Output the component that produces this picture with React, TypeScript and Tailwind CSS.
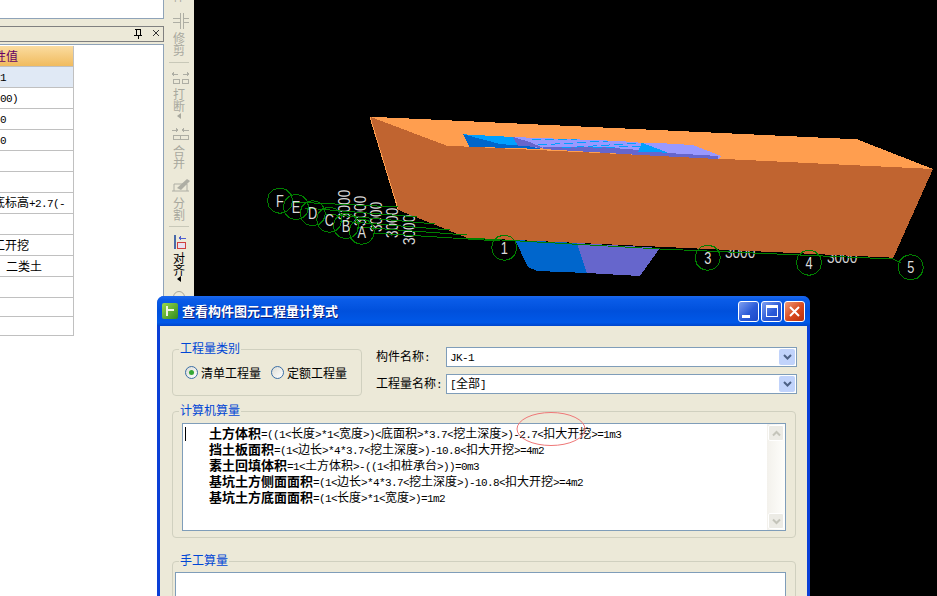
const ROWS = [
  { text: "1", cls: "ml-0", bg: "bg-[#e0e9f5]" },
  { text: "00)", cls: "ml-0" },
  { text: "0", cls: "ml-0" },
  { text: "0", cls: "ml-0" },
  { text: "" },
  { text: "" },
  { text: "底标高+2.7(-", cls: "-ml-[7px]" },
  { text: "" },
  { text: "工开挖", cls: "-ml-[7px]" },
  { text: "二类土", cls: "ml-[6px]" },
  { text: "" },
];

const FORMULAS = [
  { label: "土方体积", text: "=((1<长度>*1<宽度>)<底面积>*3.7<挖土深度>)-2.7<扣大开挖>=1m3" },
  { label: "挡土板面积", text: "=(1<边长>*4*3.7<挖土深度>)-10.8<扣大开挖>=4m2" },
  { label: "素土回填体积", text: "=1<土方体积>-((1<扣桩承台>))=0m3" },
  { label: "基坑土方侧面面积", text: "=(1<边长>*4*3.7<挖土深度>)-10.8<扣大开挖>=4m2" },
  { label: "基坑土方底面面积", text: "=(1<长度>*1<宽度>)=1m2" },
];

const AXES = [
  { x: 280, y: 200.7, t: "F" },
  { x: 296, y: 207, t: "E" },
  { x: 312.7, y: 213.3, t: "D" },
  { x: 329.3, y: 219.7, t: "C" },
  { x: 346, y: 226, t: "B" },
  { x: 361.7, y: 231.7, t: "A" },
  { x: 504.3, y: 247.7, t: "1" },
  { x: 707.7, y: 257.7, t: "3" },
  { x: 809, y: 262.7, t: "4" },
  { x: 910.7, y: 267.3, t: "5" },
];

const AXIS_LINES = [
  "293,202 398,207",
  "305,208 417,217",
  "325,214 435,224",
  "340,221 450,230",
  "357,227 467,235",
  "373,233 500,241",
  "467,238 660,249 893,259 901,263",
];

const VERTICAL_DIMS = [
  { x: 350, y: 220 },
  { x: 366, y: 226 },
  { x: 382, y: 232 },
  { x: 398, y: 238 },
  { x: 415, y: 245 },
];

function ringPoints(cx: number, cy: number, r: number) {
  const pts: string[] = [];
  for (let i = 0; i < 12; i++) {
    const a = (i / 12) * Math.PI * 2;
    pts.push(`${(cx + r * Math.cos(a)).toFixed(1)},${(cy + r * Math.sin(a)).toFixed(1)}`);
  }
  return pts.join(" ");
}

// half-width latin next to full-width CJK, like the old bitmap font
function Mixed({ text }: { text: string }) {
  const parts = text.split(/([\x00-\x7f]+)/).filter(Boolean);
  return (
    <>
      {parts.map((p, i) =>
        /^[\x00-\x7f]/.test(p) ? (
          <span key={i} className="font-['Liberation_Mono',monospace] text-[11px] tracking-[-0.6px]">
            {p}
          </span>
        ) : (
          <span key={i}>{p}</span>
        )
      )}
    </>
  );
}

function Scene() {
  return (
    <svg width="743" height="596" viewBox="194 0 743 596" shapeRendering="crispEdges" className="block">
      {/* dimension labels sit behind the solid */}
      {VERTICAL_DIMS.map((d) => (
        <text
          key={d.x}
          transform={`translate(${d.x} ${d.y}) rotate(-90) scale(0.85 1)`}
          fontFamily="Liberation Sans"
          fontSize="16"
          fill="#d4d4d4"
        >
          3000
        </text>
      ))}
      <text transform="translate(725 258) scale(0.85 1)" fontFamily="Liberation Sans" fontSize="16" fill="#d4d4d4">3000</text>
      <text transform="translate(827 263) scale(0.85 1)" fontFamily="Liberation Sans" fontSize="16" fill="#d4d4d4">3000</text>

      {/* pit below the block */}
      <polygon points="515,240 528,267 537,271 587,273 577,243" fill="#0066cc" />
      <polygon points="577,243 587,273 640,276 660,248" fill="#6666cc" />

      {/* block */}
      <polygon points="370,116.7 857,139.3 933,169 446.7,145.7" fill="#ff9e4f" />
      <polygon points="370,116.7 446.7,145.7 933,169 893.3,257.7 466.7,237.7 398.3,210" fill="#c06430" />
      <line x1="370" y1="117" x2="398" y2="209" stroke="#ff9e4f" />
      <rect x="396" y="206" width="2" height="1" fill="#ff0000" />

      {/* pit seen through the top */}
      <polygon points="513,137 620,141 640,142.7 663,143.3 693,145 721,156 718,159 640,154 543,148 517,146.5" fill="#9999ff" />
      <polygon points="513,137 518,146 543,148 530,142" fill="#6666cc" />
      <polygon points="543,147 600,147 640,150 668,153 718,156 718,159 640,155 543,149" fill="#6666cc" />
      <polygon points="463.3,134.3 513,137 518,146 500,144" fill="#00a0ff" />
      <polygon points="463.3,134.3 469.3,146.7 543,149 530,146.5 500,144" fill="#0066cc" />
      <polygon points="641.7,142.7 638.3,151.7 668,152.7" fill="#00a0ff" />
      <g stroke="#00a0ff" strokeDasharray="9 4">
        <line x1="532" y1="140" x2="578" y2="139" />
        <line x1="538" y1="145" x2="608" y2="141" />
        <line x1="562" y1="148" x2="640" y2="143" />
        <line x1="593" y1="148" x2="640" y2="146" />
      </g>

      {/* axis grid */}
      <g stroke="#008000" fill="none">
        {AXIS_LINES.map((l) => (
          <polyline key={l} points={l} />
        ))}
        {AXES.map((a) => (
          <polygon key={a.t} points={ringPoints(a.x, a.y, 12.7)} />
        ))}
      </g>
      {AXES.map((a) => (
        <text
          key={a.t}
          transform={`translate(${a.x} ${a.y + 6}) scale(0.8 1)`}
          textAnchor="middle"
          fontFamily="Liberation Sans"
          fontSize="16"
          fill="#dcdcdc"
        >
          {a.t}
        </text>
      ))}
    </svg>
  );
}

function LeftPanel() {
  return (
    <div className="w-[164px] h-full shrink-0 flex flex-col bg-[#ece9d8]">
      <div className="h-[19px] shrink-0 bg-white border-b border-r border-[#8fa3b8]" />
      <div className="h-[7px] shrink-0" />
      <div className="h-[16px] shrink-0 border-y border-r border-[#808080] bg-[#ece9d8] relative flex items-center justify-end">
        <svg width="30" height="12" viewBox="0 0 30 12" className="mr-[2px]">
          <path d="M4 1h6M5 1v6M9 1v6M3 7h8M7 7v4" stroke="#000" fill="none" shapeRendering="crispEdges" />
          <path d="M22 2l6 6M28 2l-6 6" stroke="#333" fill="none" />
        </svg>
      </div>
      <div className="h-[2px] shrink-0" />
      <div className="flex-1 bg-white border-r border-t border-[#8fa3b8] pt-[1px]">
        <div className="w-[74px] overflow-hidden border-r border-[#c0c0c0]">
          <div className="h-[21px] border-b border-[#c0c0c0] bg-[linear-gradient(180deg,#fbdca0,#f1bb5e)] flex items-center whitespace-nowrap text-[12px] text-[#660066]">
            <span className="-ml-[18px]">属性值</span>
          </div>
          {ROWS.map((r, i) => (
            <div
              key={i}
              className={`h-[21px] border-b border-[#c0c0c0] flex items-center whitespace-nowrap text-[12px] text-black ${r.bg ?? ""}`}
            >
              <span className={r.cls}>
                <Mixed text={r.text} />
              </span>
            </div>
          ))}
          <div className="h-[19px] border-b border-[#c0c0c0]" />
          <div className="h-[19px] border-b border-[#c0c0c0]" />
        </div>
      </div>
    </div>
  );
}

function VChars({ a, b, off }: { a: string; b: string; off?: boolean }) {
  return (
    <div className={`flex flex-col items-center text-[12px] leading-[12px] ${off ? "text-[#a8a89e]" : "text-black"}`}>
      <span>{a}</span>
      <span>{b}</span>
    </div>
  );
}

function Toolbar() {
  const gray = "#aeaea4";
  return (
    <div className="w-[30px] h-full shrink-0 bg-[#ece9d8] flex flex-col items-center">
      <span className="-mt-[10px] h-[12px] text-[12px] leading-[12px] text-[#a8a89e]">伸</span>
      <svg width="30" height="16" viewBox="0 0 30 16" className="mt-[11px] block" shapeRendering="crispEdges">
        <path d="M16.5 0v16M19.5 0v16M9 5h7M9 9h7M20 5h5M20 9h5" stroke={gray} fill="none" />
      </svg>
      <div className="mt-[3px]">
        <VChars a="修" b="剪" off />
      </div>
      <div className="mt-[6px] h-px w-[20px] bg-[#c8c8b8]" />
      <svg width="30" height="14" viewBox="0 0 30 14" className="mt-[8px] block" shapeRendering="crispEdges">
        <path d="M8 3h6M19 3h6" stroke={gray} fill="none" />
        <path d="M7 3l3-2.500v5zM26 3l-3-2.500v5z" fill={gray} />
        <path d="M9 8.500h6v4h-6zM18 8.500h6v4h-6z" stroke={gray} fill="none" />
      </svg>
      <div className="mt-[3px]">
        <VChars a="打" b="断" off />
      </div>
      <span className="mt-[1px] h-0 w-0 border-y-[3px] border-r-[4px] border-y-transparent border-r-[#a8a89e]" />
      <svg width="30" height="14" viewBox="0 0 30 14" className="mt-[8px] block" shapeRendering="crispEdges">
        <path d="M8 3h5M19 3h6" stroke={gray} fill="none" />
        <path d="M15 3l-3-2.500v5zM17 3l3-2.500v5z" fill={gray} />
        <path d="M9 8.500h15v4h-15zM16.500 8v5" stroke={gray} fill="none" />
      </svg>
      <div className="mt-[4px]">
        <VChars a="合" b="并" off />
      </div>
      <svg width="30" height="16" viewBox="0 0 30 16" className="mt-[8px] block">
        <path d="M8 14h17M10 7h13M10 7v7M23 7v7" stroke={gray} fill="none" />
        <path d="M13 11l10-9 3 2-9 9z" fill={gray} />
      </svg>
      <div className="mt-[4px]">
        <VChars a="分" b="割" off />
      </div>
      <div className="mt-[5px] h-px w-[20px] bg-[#c8c8b8]" />
      <svg width="30" height="15" viewBox="0 0 30 15" className="mt-[8px] block" shapeRendering="crispEdges">
        <rect x="10" y="0" width="2" height="14" fill="#4a6aa8" />
        <path d="M15 3h7" stroke="#5060d0" />
        <path d="M14 3l3-2.500v5z" fill="#5060d0" />
        <rect x="13.500" y="7.500" width="8" height="6" fill="#e8e0f0" stroke="#d04040" />
      </svg>
      <div className="mt-[2px]">
        <VChars a="对" b="齐" />
      </div>
      <span className="h-0 w-0 border-y-[3px] border-r-[4px] border-y-transparent border-r-black" />
      <span className="mt-[9px] w-[12px] h-[12px] rounded-full border border-[#a8a89e]" />
    </div>
  );
}

function Group({ title, className, children }: { title: string; className: string; children?: React.ReactNode }) {
  return (
    <div className={`relative rounded-[4px] border border-[#d0d0bf] ${className}`}>
      <span className="absolute left-[6px] -top-[9px] bg-[#ece9d8] px-[1px] text-[12px] leading-[14px] text-[#0046d5]">
        {title}
      </span>
      {children}
    </div>
  );
}

function Radio({ checked, label }: { checked?: boolean; label: string }) {
  return (
    <div className="flex items-center gap-[3px]">
      <span className="w-[13px] h-[13px] rounded-full border border-[#3a6ea5] bg-[linear-gradient(135deg,#dcdcd4,#ffffff)] flex items-center justify-center">
        {checked && <span className="w-[5px] h-[5px] rounded-full bg-[#35a835]" />}
      </span>
      <span className="text-[12px] text-black">{label}</span>
    </div>
  );
}

function Combo({ value }: { value: string }) {
  return (
    <div className="flex-1 h-[20px] border border-[#7f9db9] bg-white flex items-center justify-between pl-[3px] pr-px">
      <span className="text-[12px] text-black">
        <Mixed text={value} />
      </span>
      <span className="w-[16px] h-[16px] rounded-[2px] bg-[#c1d3fb] flex items-center justify-center">
        <svg width="9" height="7" viewBox="0 0 9 7">
          <path d="M1 1l3.500 3.500L8 1" stroke="#4d6185" strokeWidth="2" fill="none" />
        </svg>
      </span>
    </div>
  );
}

function ScrollButton({ up }: { up?: boolean }) {
  return (
    <span className="w-[16px] h-[16px] rounded-[2px] border border-white bg-[#ecebe5] flex items-center justify-center">
      <svg width="9" height="7" viewBox="0 0 9 7">
        <path d={up ? "M1 5.500l3.500-3.500L8 5.500" : "M1 1.500l3.500 3.500L8 1.500"} stroke="#c4c4ba" strokeWidth="2" fill="none" />
      </svg>
    </span>
  );
}

function TitleButton({ close, children }: { close?: boolean; children: React.ReactNode }) {
  return (
    <span
      className={`w-[21px] h-[21px] rounded-[3px] border border-white flex items-center justify-center ${
        close
          ? "bg-[linear-gradient(135deg,#ef9a78,#d8481c_55%,#b8300c)]"
          : "bg-[linear-gradient(135deg,#7f9ff0,#2a5ad8_55%,#1c48c8)]"
      }`}
    >
      {children}
    </span>
  );
}

function Dialog() {
  return (
    <div className="absolute left-[157px] top-[296px] w-[653px] h-[320px] rounded-t-[7px] overflow-hidden flex flex-col bg-[#0a3fd6]">
      <div className="h-[30px] shrink-0 flex items-center bg-[linear-gradient(180deg,#1c68ee_0%,#0a5ce8_12%,#0050dc_50%,#0058e8_88%,#0046cc_100%)]">
        <span className="ml-[5px] w-[16px] h-[16px] rounded-[2px] bg-[linear-gradient(135deg,#9ad84a,#2f8a1e)] flex items-center justify-center">
          <svg width="12" height="12" viewBox="0 0 12 12" shapeRendering="crispEdges">
            <path d="M3 1v10M3 5h7" stroke="#eef4e4" strokeWidth="2" fill="none" />
          </svg>
        </span>
        <span className="ml-[4px] text-[13px] font-bold text-white [text-shadow:1px_1px_#0a1f80]">
          查看构件图元工程量计算式
        </span>
        <div className="ml-auto mr-[5px] flex items-center gap-[2px]">
          <TitleButton>
            <span className="w-[8px] h-[3px] bg-white self-end mb-[3px] mr-[6px]" />
          </TitleButton>
          <TitleButton>
            <span className="w-[12px] h-[12px] border border-white border-t-[3px]" />
          </TitleButton>
          <TitleButton close>
            <svg width="13" height="13" viewBox="0 0 13 13">
              <path d="M2 2l9 9M11 2l-9 9" stroke="#fff" strokeWidth="2" fill="none" />
            </svg>
          </TitleButton>
        </div>
      </div>

      <div className="flex-1 mx-[3px] bg-[#ece9d8] pl-[12px] pt-[21px] relative">
        <div className="flex items-start">
          <Group title="工程量类别" className="w-[190px] h-[47px] mt-[2px] shrink-0 flex items-center pl-[12px] gap-[10px]">
            <Radio checked label="清单工程量" />
            <Radio label="定额工程量" />
          </Group>
          <div className="ml-[14px] w-[421px] flex flex-col gap-[7px] text-[12px] text-black">
            <div className="flex items-center">
              <span className="w-[70px]"><Mixed text="构件名称:" /></span>
              <Combo value="JK-1" />
            </div>
            <div className="flex items-center">
              <span className="w-[70px]"><Mixed text="工程量名称:" /></span>
              <Combo value="[全部]" />
            </div>
          </div>
        </div>

        <Group title="计算机算量" className="mt-[15px] w-[624px] h-[127px] pt-[11px] pl-[9px]">
          <div className="relative w-[604px] h-[108px] border border-[#7f9db9] bg-white flex">
            <span className="absolute left-[2px] top-[3px] w-px h-[14px] bg-black" />
            <div className="flex-1 pl-[26px] pt-[1px]">
              {FORMULAS.map((f) => (
                <div key={f.label} className="h-[16px] leading-[16px] whitespace-nowrap text-[12px] text-black">
                  <span className="text-[13px] font-bold">{f.label}</span>
                  <Mixed text={f.text} />
                </div>
              ))}
            </div>
            <div className="w-[18px] bg-[linear-gradient(90deg,#f3f1ec,#fefefb)] flex flex-col items-center justify-between py-px">
              <ScrollButton up />
              <ScrollButton />
            </div>
          </div>
        </Group>

        <Group title="手工算量" className="mt-[23px] w-[624px] h-[100px] pt-[10px] pl-[2px]">
          <div className="w-[611px] h-[100px] border border-[#7f9db9] bg-white" />
        </Group>

        {/* hand-drawn red mark over the formula */}
        <svg width="72" height="36" viewBox="0 0 72 36" className="absolute left-[355px] top-[85px]">
          <ellipse cx="36" cy="18" rx="34" ry="16.500" stroke="#ee7777" fill="none" />
        </svg>
      </div>
    </div>
  );
}

export default function App() {
  return (
    <div className="relative w-[937px] h-[596px] overflow-hidden bg-black flex font-['Noto_Sans_CJK_SC',sans-serif]">
      <LeftPanel />
      <Toolbar />
      <Scene />
      <Dialog />
    </div>
  );
}
